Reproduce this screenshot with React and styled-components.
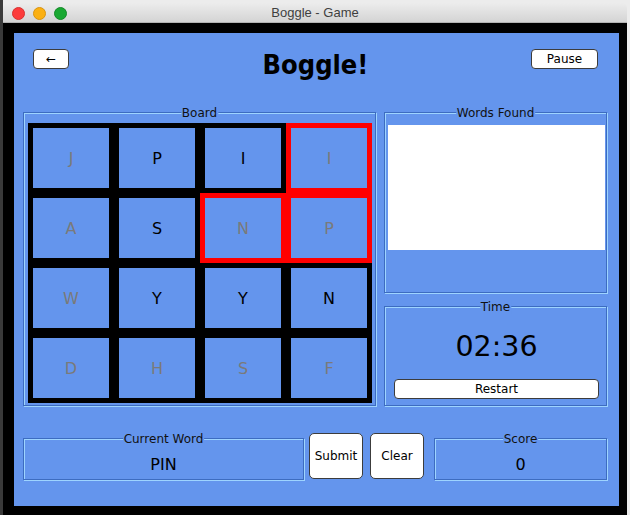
import styled, { createGlobalStyle } from 'styled-components'

const GlobalStyle = createGlobalStyle`
  html, body {
    margin: 0;
    padding: 0;
  }
  body {
    width: 630px;
    height: 515px;
    overflow: hidden;
    background: #ececec;
    font-family: "DejaVu Sans", "Noto Sans", sans-serif;
  }
`

const board = [
  [{ l: 'J', dim: true }, { l: 'P' }, { l: 'I' }, { l: 'I', dim: true, on: true }],
  [{ l: 'A', dim: true }, { l: 'S' }, { l: 'N', dim: true, on: true }, { l: 'P', dim: true, on: true }],
  [{ l: 'W', dim: true }, { l: 'Y' }, { l: 'Y' }, { l: 'N' }],
  [{ l: 'D', dim: true }, { l: 'H', dim: true }, { l: 'S', dim: true }, { l: 'F', dim: true }],
]

export default function App() {
  return (
    <Desktop>
      <GlobalStyle />
      <Window>
        <TitleBar>
          <Lights>
            <Light color="#fc3b3b" edge="#d8312f" />
            <Light color="#fbb012" edge="#d99410" />
            <Light color="#19a832" edge="#148a28" />
          </Lights>
          <WindowTitle>Boggle - Game</WindowTitle>
        </TitleBar>
        <Frame>
          <Content>
            <Header>
              <SmallButton width={36} start>←</SmallButton>
              <Title>Boggle!</Title>
              <SmallButton width={67}>Pause</SmallButton>
            </Header>

            <Main>
              <BoardPanel>
                <Legend>Board</Legend>
                <Grid>
                  {board.flat().map((c, i) => (
                    <Cell key={i} on={c.on} dim={c.dim}>{c.l}</Cell>
                  ))}
                </Grid>
              </BoardPanel>

              <Side>
                <WordsPanel>
                  <Legend>Words Found</Legend>
                  <WordList />
                </WordsPanel>
                <TimePanel>
                  <Legend>Time</Legend>
                  <Timer>02:36</Timer>
                  <WideButton>Restart</WideButton>
                </TimePanel>
              </Side>
            </Main>

            <Bottom>
              <InfoPanel width={281}>
                <Legend>Current Word</Legend>
                <Value>PIN</Value>
              </InfoPanel>
              <BigButton left={5}>Submit</BigButton>
              <BigButton left={7}>Clear</BigButton>
              <InfoPanel width={173} left={10}>
                <Legend>Score</Legend>
                <Value>0</Value>
              </InfoPanel>
            </Bottom>
          </Content>
        </Frame>
      </Window>
    </Desktop>
  )
}

const Desktop = styled.div`
  width: 630px;
  height: 515px;
  box-sizing: border-box;
  border-left: 3px solid #3a3a3a;
  padding-top: 3px;
`
const Window = styled.div`
  width: 624px;
  display: flex;
  flex-direction: column;
`
const TitleBar = styled.div`
  height: 20px;
  position: relative;
  display: flex;
  align-items: center;
  justify-content: center;
  border-radius: 5px 5px 0 0;
  background: linear-gradient(#ececec, #d4d4d4);
  border-bottom: 1px solid #b3b3b3;
  box-sizing: border-box;
`
const Lights = styled.div`
  position: absolute;
  left: 9px;
  top: 4px;
  display: flex;
  gap: 8px;
`
const Light = styled.span`
  width: 11px;
  height: 11px;
  border-radius: 50%;
  background: ${(p) => p.color};
  border: 0.5px solid ${(p) => p.edge};
`
const WindowTitle = styled.span`
  font-family: "Liberation Sans", Arial, sans-serif;
  font-size: 13px;
  color: #3f3f3f;
`
const Frame = styled.div`
  background: #000;
  padding: 10px 8px 9px 11px;
`
const Content = styled.div`
  height: 473px;
  background: #6495ed;
  padding-top: 16px;
  box-sizing: border-box;
`
const Header = styled.div`
  height: 63px;
  padding: 0 21px 0 19px;
  display: grid;
  grid-template-columns: 1fr auto 1fr;
  align-items: start;
`
const SmallButton = styled.button`
  justify-self: ${(p) => (p.start ? 'start' : 'end')};
  width: ${(p) => p.width}px;
  height: 20px;
  padding: 0;
  background: #fff;
  border: 1px solid #3c3c3c;
  border-radius: 4px;
  font-family: "DejaVu Sans", sans-serif;
  font-size: 12px;
  color: #000;
`
const Title = styled.h1`
  margin: 0;
  font-family: "DejaVu Sans Condensed", "DejaVu Sans", sans-serif;
  font-weight: bold;
  font-size: 27px;
  line-height: 32px;
  color: #000;
`
const Main = styled.div`
  display: flex;
  gap: 8px;
  margin-left: 9px;
`
const Panel = styled.div`
  position: relative;
  box-sizing: border-box;
  border: 1px solid #3d6cc0;
  box-shadow: inset 1px 1px 0 #9ed4ff, 1px 1px 0 #9ed4ff;
`
const Legend = styled.span`
  position: absolute;
  top: -7px;
  left: 50%;
  transform: translateX(-50%);
  padding: 0 1px;
  background: #6495ed;
  font-size: 12px;
  line-height: 14px;
  color: #111;
  white-space: nowrap;
`
const BoardPanel = styled(Panel)`
  width: 353px;
  padding: 10px 3px 2px 4px;
`
const Grid = styled.div`
  display: grid;
  grid-template-columns: repeat(4, 86px);
  grid-template-rows: repeat(4, 70px);
`
const Cell = styled.div`
  box-sizing: border-box;
  border: 5px solid ${(p) => (p.on ? '#ff0000' : '#000')};
  background: #6495ed;
  display: flex;
  align-items: center;
  justify-content: center;
  font-size: 16px;
  color: ${(p) => (p.dim ? '#7a7a7a' : '#000')};
`
const Side = styled.div`
  display: flex;
  flex-direction: column;
  gap: 13px;
`
const WordsPanel = styled(Panel)`
  width: 223px;
  height: 181px;
  padding: 12px 1px 0 3px;
`
const WordList = styled.div`
  height: 125px;
  background: #fff;
`
const TimePanel = styled(Panel)`
  width: 223px;
  height: 100px;
  padding: 20px 7px 6px 9px;
  display: flex;
  flex-direction: column;
  align-items: stretch;
`
const Timer = styled.div`
  text-align: center;
  font-size: 28.5px;
  line-height: 40px;
  color: #000;
`
const WideButton = styled.button`
  margin-top: 12px;
  height: 20px;
  padding: 0;
  background: #fff;
  border: 1px solid #3c3c3c;
  border-radius: 4px;
  font-family: "DejaVu Sans", sans-serif;
  font-size: 12px;
  color: #000;
`
const Bottom = styled.div`
  display: flex;
  align-items: flex-start;
  margin: 27px 0 0 9px;
`
const InfoPanel = styled(Panel)`
  width: ${(p) => p.width}px;
  height: 42px;
  margin: 5px 0 0 ${(p) => p.left || 0}px;
  padding-top: 14px;
  text-align: center;
`
const Value = styled.div`
  font-size: 16px;
  line-height: 24px;
  color: #000;
`
const BigButton = styled.button`
  width: 54px;
  height: 46px;
  margin-left: ${(p) => p.left}px;
  padding: 0;
  background: #fff;
  border: 1px solid #3c3c3c;
  border-radius: 5px;
  font-family: "DejaVu Sans", sans-serif;
  font-size: 12px;
  color: #000;
`
